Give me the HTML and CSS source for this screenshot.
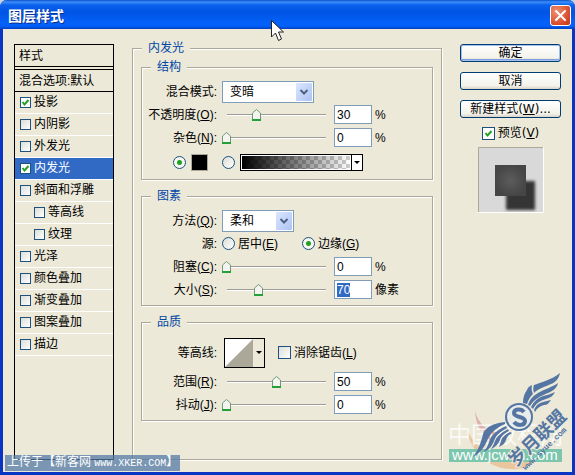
FILE: index.html
```html
<!DOCTYPE html>
<html lang="zh-CN">
<head>
    <meta charset="UTF-8">
    <meta name="viewport" content="width=device-width, initial-scale=1.0">
    <title>图层样式</title>
    <link rel="stylesheet" href="styles.css">
</head>
<body>
    <div class="window">
        <header class="titlebar">
            <h1>图层样式</h1>
            <button class="close" aria-label="关闭">
                <svg width="13" height="13" viewBox="0 0 13 13"><path d="M2 2l9 9M11 2l-9 9" stroke="#fff" stroke-width="2" stroke-linecap="round"/></svg>
            </button>
        </header>
        <div class="content">
            <nav class="styles">
                <h2>样式</h2>
                <h3>混合选项:默认</h3>
                <ul>
                    <li><label><input type="checkbox" checked>投影</label></li>
                    <li><label><input type="checkbox">内阴影</label></li>
                    <li><label><input type="checkbox">外发光</label></li>
                    <li class="selected"><label><input type="checkbox" checked>内发光</label></li>
                    <li><label><input type="checkbox">斜面和浮雕</label></li>
                    <li class="sub"><label><input type="checkbox">等高线</label></li>
                    <li class="sub"><label><input type="checkbox">纹理</label></li>
                    <li><label><input type="checkbox">光泽</label></li>
                    <li><label><input type="checkbox">颜色叠加</label></li>
                    <li><label><input type="checkbox">渐变叠加</label></li>
                    <li><label><input type="checkbox">图案叠加</label></li>
                    <li><label><input type="checkbox">描边</label></li>
                </ul>
            </nav>

            <fieldset class="panel">
                <legend>内发光</legend>

                <fieldset class="group">
                    <legend>结构</legend>
                    <div class="row">
                        <label class="name" for="mode">混合模式:</label>
                        <select id="mode" class="wide"><option>变暗</option></select>
                    </div>
                    <div class="row">
                        <label class="name" for="opacity">不透明度(<u>O</u>):</label>
                        <div class="control">
                            <input type="range" min="0" max="100" value="30" aria-label="不透明度">
                            <input type="text" id="opacity" value="30">
                            <span>%</span>
                        </div>
                    </div>
                    <div class="row">
                        <label class="name" for="noise">杂色(<u>N</u>):</label>
                        <div class="control">
                            <input type="range" min="0" max="100" value="0" aria-label="杂色">
                            <input type="text" id="noise" value="0">
                            <span>%</span>
                        </div>
                    </div>
                    <div class="row fill">
                        <div class="name solid">
                            <input type="radio" name="fill" aria-label="纯色" checked>
                            <button class="swatch" aria-label="颜色"></button>
                        </div>
                        <div class="control">
                            <input type="radio" name="fill" aria-label="渐变">
                            <button class="gradient" aria-label="渐变编辑"><span class="ramp"></span><span class="drop"></span></button>
                        </div>
                    </div>
                </fieldset>

                <fieldset class="group">
                    <legend>图素</legend>
                    <div class="row">
                        <label class="name" for="method">方法(<u>Q</u>):</label>
                        <select id="method"><option>柔和</option></select>
                    </div>
                    <div class="row">
                        <span class="name">源:</span>
                        <div class="control source">
                            <label><input type="radio" name="source"><span>居中(<u>E</u>)</span></label>
                            <label><input type="radio" name="source" checked><span>边缘(<u>G</u>)</span></label>
                        </div>
                    </div>
                    <div class="row">
                        <label class="name" for="choke">阻塞(<u>C</u>):</label>
                        <div class="control">
                            <input type="range" min="0" max="100" value="0" aria-label="阻塞">
                            <input type="text" id="choke" value="0">
                            <span>%</span>
                        </div>
                    </div>
                    <div class="row">
                        <label class="name" for="size">大小(<u>S</u>):</label>
                        <div class="control">
                            <input type="range" min="0" max="220" value="70" aria-label="大小">
                            <input type="text" id="size" value="70" autofocus>
                            <span>像素</span>
                        </div>
                    </div>
                </fieldset>

                <fieldset class="group">
                    <legend>品质</legend>
                    <div class="row contour-row">
                        <span class="name">等高线:</span>
                        <div class="control">
                            <button class="contour" aria-label="等高线">
                                <svg width="28" height="28" viewBox="0 0 28 28"><path d="M0 0h28v28H0z" fill="#fff"/><path d="M28 0v28H0z" fill="#aca899"/></svg>
                                <span class="drop"></span>
                            </button>
                            <label><input type="checkbox"><span>消除锯齿(<u>L</u>)</span></label>
                        </div>
                    </div>
                    <div class="row">
                        <label class="name" for="range">范围(<u>R</u>):</label>
                        <div class="control">
                            <input type="range" min="0" max="100" value="50" aria-label="范围">
                            <input type="text" id="range" value="50">
                            <span>%</span>
                        </div>
                    </div>
                    <div class="row">
                        <label class="name" for="jitter">抖动(<u>J</u>):</label>
                        <div class="control">
                            <input type="range" min="0" max="100" value="0" aria-label="抖动">
                            <input type="text" id="jitter" value="0">
                            <span>%</span>
                        </div>
                    </div>
                </fieldset>
            </fieldset>

            <aside class="actions">
                <button class="btn default">确定</button>
                <button class="btn">取消</button>
                <button class="btn">新建样式(<u>W</u>)...</button>
                <label class="preview-label"><input type="checkbox" checked><span>预览(<u>V</u>)</span></label>
                <svg class="preview" width="66" height="66" viewBox="0 0 66 66">
                    <defs>
                        <radialGradient id="glow"><stop offset="0" stop-color="#5c5c5c"/><stop offset="1" stop-color="#464646"/></radialGradient>
                        <filter id="soft" x="-20%" y="-20%" width="140%" height="140%"><feGaussianBlur stdDeviation="1.5"/></filter>
                    </defs>
                    <path d="M0 0h66v66H0z" fill="#d9d9d9"/>
                    <path d="M28 34h29v29H28z" fill="#353535" filter="url(#soft)"/>
                    <path d="M17 18h31v31H17z" fill="url(#glow)"/>
                    <path d="M.5 66V.5H66" fill="none" stroke="#aca899"/>
                    <path d="M0 65.5h65.5V0" fill="none" stroke="#fff"/>
                </svg>
            </aside>
        </div>

        <p class="upload">上传于【新客网 <span>www.XKER.COM</span>】</p>

        <svg class="brand" width="140" height="125" viewBox="0 0 140 125">
            <path d="M40 61c4 14 12 20 24 22l-8 8c-9-6-15-15-16-30z" fill="#d9a3a6" opacity=".8"/>
            <path d="M31 78c6 14 17 24 30 29 12 5 26 6 41 2-5 7-16 11-28 10-22-2-38-17-43-41z" fill="#eab98c" opacity=".75"/>
            <text class="site-name" x="13" y="93">中国教程网</text>
            <path d="M14 99h113v13H14z" fill="#7cc6ae"/>
            <text class="site-url" x="17" y="110">www.jcwcn.com</text>
            <g fill="#5576a3">
                <!-- right wing -->
                <path d="M88 53c0-5 1-9 4-13 1-3 3-4 5-5-1 4 0 7 1 9-3 3-5 6-6 10z"/>
                <path d="M99 43c-1-3-1-6 0-8 8-3 17-5 26-12-1 5-4 9-9 11-6 3-12 4-17 9z"/>
                <path d="M93 55c2-6 5-9 10-12 6-4 13-5 20-10-1 5-5 8-10 10-7 3-13 5-18 13z"/>
                <path d="M96 57c3-6 7-9 12-11 4-1 8-2 12-4-2 4-5 6-9 7-6 2-10 4-13 10z"/>
                <path d="M99 60c2-5 5-7 9-8 3-1 5-1 8-2-2 3-4 5-7 5-4 1-7 3-9 7z"/>
                <!-- left wing -->
                <path d="M70 72c-10 1-19 4-22 12-2 8-4 15-10 23 7-4 11-9 14-16 3-8 9-13 18-17z"/>
                <path d="M71 76c-9 4-15 9-17 16-1 4-3 7-6 10 6-2 9-6 11-11 2-6 6-9 13-13z"/>
                <path d="M73 79c-7 4-11 7-13 12-1 3-2 5-4 8 5-2 7-5 9-9 1-4 5-7 9-9z"/>
                <path d="M75 82c-5 3-8 5-9 9l-2 6c4-2 6-4 7-7 1-4 3-5 6-7z"/>
                <circle cx="84" cy="67" r="14"/>
            </g>
            <circle cx="84" cy="67" r="12" fill="#e8ecea"/>
            <path d="M89 62c-3-4-10-3-10 1 0 5 11 3 11 8 0 5-8 5-11 1" fill="none" stroke="#5576a3" stroke-width="4"/>
            <g transform="rotate(-44 83 107)">
                <text class="league" x="74" y="113">岁月联盟</text>
                <text class="league-url" x="79" y="122">www.syue.com</text>
            </g>
        </svg>

        <svg class="cursor" width="14" height="22" viewBox="0 0 14 22"><path d="M.5.5v16.500l4-4 3 7.500 3-1.500-3-7h5z" fill="#fff" stroke="#222"/></svg>
    </div>
    <script>
        document.getElementById('size').select();
    </script>
</body>
</html>
```

FILE: styles.css
```css
* {
    box-sizing: border-box;
}

body {
    margin: 0;
    background-color: #c9d3e4;
    color: #000;
    font-family: "Liberation Sans", "Noto Sans CJK SC", sans-serif;
    font-size: 12px;
    line-height: 16px;
}

h1, h2, h3, ul, p {
    margin: 0;
    padding: 0;
    font-size: 12px;
    font-weight: normal;
}

input, button, select {
    margin: 0;
    padding: 0;
    font: inherit;
    color: inherit;
    outline: none;
}

.window {
    position: relative;
    display: flex;
    flex-direction: column;
    min-height: 100vh;
    border: 3px solid #0a34c4;
    border-top: 0;
    border-radius: 7px 7px 0 0;
    background-color: #ece9d8;
}

/* title bar */
.titlebar {
    display: flex;
    align-items: center;
    justify-content: space-between;
    height: 29px;
    margin: 0 -3px;
    padding: 2px 4px 0 8px;
    border-radius: 7px 7px 0 0;
    background: linear-gradient(#0a50c8 0, #3d8ffa 2px, #0b60ee 5px, #0054e3 12px, #0360f8 22px, #0260fa 26px, #0340c0 29px);
}

.titlebar h1 {
    color: #fff;
    font-size: 14px;
    font-weight: bold;
    text-shadow: 1px 1px 0 #0a2f8c;
}

.close {
    display: flex;
    align-items: center;
    justify-content: center;
    width: 21px;
    height: 21px;
    border: 1px solid #fff;
    border-radius: 3px;
    background: radial-gradient(circle at 30% 30%, #f0906f, #d8492a 70%, #b8361a);
}

.content {
    flex: 1;
    display: grid;
    grid-template-columns: 100px 1fr 101px;
    gap: 18px;
    padding: 11px 11px 12px;
}

/* style list */
.styles {
    margin-top: 4px;
    border: 1px solid #000;
}

.styles h2 {
    height: 22px;
    padding: 3px 4px;
    border-bottom: 1px solid #000;
}

.styles h3 {
    height: 23px;
    margin-top: 2px;
    padding: 3px 4px;
    border-top: 1px solid #000;
    border-bottom: 1px solid #000;
}

.styles ul {
    list-style: none;
}

.styles li {
    height: 22px;
    padding: 2px 5px;
    border-bottom: 1px solid #fff;
}

.styles li.sub {
    padding-left: 19px;
}

.styles li.selected {
    background-color: #316ac5;
    color: #fff;
}

label {
    display: flex;
    align-items: center;
    gap: 3px;
    white-space: nowrap;
}

/* tick boxes and radios */
input[type="checkbox"] {
    appearance: none;
    flex: none;
    width: 13px;
    height: 13px;
    border: 1px solid #1c5180;
    background: linear-gradient(135deg, #dcdcd7, #fff);
}

.styles input[type="checkbox"] {
    width: 11px;
    height: 11px;
}

input[type="checkbox"]:checked {
    background: #fff url('data:image/svg+xml,<svg xmlns="http://www.w3.org/2000/svg" viewBox="0 0 9 9"><path d="M1.500 4l2 2.500 4-4.500" fill="none" stroke="%2321a121" stroke-width="2"/></svg>') center / 9px 9px no-repeat;
}

input[type="radio"] {
    appearance: none;
    flex: none;
    width: 13px;
    height: 13px;
    border: 1px solid #1c5180;
    border-radius: 50%;
    background: linear-gradient(135deg, #dcdcd7, #fff);
}

input[type="radio"]:checked {
    background: radial-gradient(circle, #21a121 2px, #f6f6f2 3px);
}

/* groups */
fieldset {
    min-width: 0;
    margin: 0;
    padding: 0;
    border: 1px solid #aca899;
    box-shadow: 1px 1px 0 #fff, inset 1px 1px 0 #fff;
}

legend {
    margin-left: 9px;
    padding: 0 6px;
    background-color: #ece9d8;
    color: #0046a5;
}

.panel {
    padding: 3px 8px 0;
}

.panel > legend {
    margin-left: 1px;
}

.group {
    margin-bottom: 8px;
    padding: 5px 0 4px;
}

.row {
    display: grid;
    grid-template-columns: 75px 1fr;
    column-gap: 5px;
    align-items: center;
    height: 23px;
}

.row.fill {
    height: 26px;
}

.contour-row {
    height: 35px;
}

.name {
    display: block;
    text-align: right;
    white-space: nowrap;
}

.solid {
    display: flex;
    align-items: center;
    justify-content: flex-end;
    gap: 5px;
    padding-right: 9px;
}

.control {
    display: flex;
    align-items: center;
    gap: 3px;
}

.source {
    gap: 24px;
}

.control input[type="text"] {
    width: 38px;
    height: 19px;
    padding: 0 2px;
    border: 1px solid #7f9db9;
    background-color: #fff;
}

input::selection {
    background-color: #316ac5;
    color: #fff;
}

select {
    appearance: none;
    width: 72px;
    height: 22px;
    padding-left: 7px;
    border: 1px solid #7f9db9;
    background: #fff url('data:image/svg+xml,<svg xmlns="http://www.w3.org/2000/svg" viewBox="0 0 16 18"><defs><linearGradient id="g" x2="1" y2="1"><stop stop-color="%23dce6fe"/><stop offset="1" stop-color="%23adc3f4"/></linearGradient></defs><rect width="16" height="18" rx="1" fill="url(%23g)"/><path d="M4.500 7l3.500 3.500L11.500 7" fill="none" stroke="%234d6185" stroke-width="2"/></svg>') right 1px center / 16px 18px no-repeat;
}

select.wide {
    width: 92px;
}

input[type="range"] {
    appearance: none;
    width: 109px;
    height: 15px;
    background: linear-gradient(#9d9c99 1px, #fff 1px) center / 99px 2px no-repeat;
}

input[type="range"]::-webkit-slider-thumb {
    appearance: none;
    width: 9px;
    height: 12px;
    background: url('data:image/svg+xml,<svg xmlns="http://www.w3.org/2000/svg" viewBox="0 0 9 12"><path d="M.5 11.500V4l4-3.500 4 3.500v7.500z" fill="%23f3f3ef" stroke="%236f9a78"/><path d="M0 10h9v2H0z" fill="%2321a138"/></svg>') no-repeat;
}

.swatch {
    width: 17px;
    height: 17px;
    border: 1px solid #aca899;
    background-color: #000;
}

.gradient {
    display: flex;
    width: 123px;
    height: 17px;
    margin-left: 2px;
    border: 1px solid #000;
    background-color: #fff;
}

.ramp {
    flex: 1;
    align-self: stretch;
    margin: 1px;
    background: linear-gradient(to right, #000, transparent), repeating-conic-gradient(#fff 0 25%, #ccc 0 50%) 0 0 / 8px 8px;
}

.drop {
    display: flex;
    align-items: center;
    justify-content: center;
    align-self: stretch;
    width: 11px;
    border-left: 1px solid #000;
}

.drop::before {
    content: "";
    border: 3px solid transparent;
    border-top-color: #000;
    border-bottom: 0;
}

.contour {
    display: flex;
    width: 41px;
    height: 30px;
    margin: 0 10px 0 2px;
    border: 1px solid #000;
    background-color: #ece9d8;
}

.contour .drop {
    border-left: 0;
}

/* right column */
.actions {
    display: flex;
    flex-direction: column;
    gap: 10px;
    margin-top: 4px;
    font-family: "DejaVu Sans", "Noto Sans CJK SC", sans-serif;
}

.btn {
    height: 18px;
    border: 1px solid #003c74;
    border-radius: 3px;
    background: linear-gradient(#fff, #f3f2ea 80%, #d8d2c4);
    line-height: 16px;
    white-space: nowrap;
}

.btn.default {
    box-shadow: inset 0 0 0 1px #a3bff0, inset 0 -2px 0 #7e9fdc;
}

.preview-label {
    align-self: center;
    margin-top: -3px;
}

.preview {
    align-self: center;
    margin-top: -4px;
}

/* overlays */
.upload {
    position: absolute;
    left: 2px;
    bottom: 1px;
    padding: 0 2px;
    background-color: rgba(84, 122, 166, 0.75);
    color: #fff;
    line-height: 15px;
    white-space: pre;
}

.upload span {
    font-family: "Liberation Mono", monospace;
    font-size: 10px;
}

.brand {
    position: absolute;
    right: -3px;
    bottom: -3px;
}

.site-name {
    fill: #fff;
    fill-opacity: 0.8;
    font-size: 23px;
}

.site-url {
    fill: #fff;
    font-size: 15px;
}

.league {
    fill: #5576a3;
    stroke: #ece9d8;
    stroke-width: 2px;
    paint-order: stroke;
    font-size: 18px;
    font-weight: bold;
}

.league-url {
    fill: #5576a3;
    font-family: "Liberation Mono", monospace;
    font-size: 8px;
    font-weight: bold;
}

.cursor {
    position: absolute;
    left: 268px;
    top: 20px;
}
```
